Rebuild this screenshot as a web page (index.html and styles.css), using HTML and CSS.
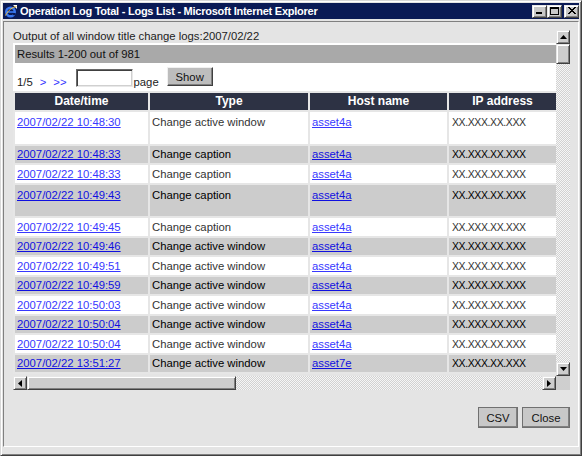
FILE: index.html
```html
<!DOCTYPE html>
<html>
<head>
<meta charset="utf-8">
<title>Operation Log Total - Logs List</title>
<link rel="stylesheet" href="styles.css">
</head>
<body>
<div class="window">
  <div class="titlebar">
    <svg class="app-icon" viewBox="0 0 14 14" width="14" height="14">
      <rect x="0.5" y="0.5" width="13" height="13" fill="#0a1a55"/>
      <path d="M9 1 L13 1 L13 5 Z" fill="#fff"/>
      <circle cx="6.5" cy="8" r="4.3" fill="none" stroke="#3a78f0" stroke-width="2.4"/>
      <rect x="3" y="7.2" width="7.5" height="1.6" fill="#3a78f0"/>
      <rect x="8.6" y="9" width="3" height="2.2" fill="#0a1a55"/>
      <path d="M1.5 11.5 C4 6 9 3 12.5 2.5" fill="none" stroke="#f0c040" stroke-width="1"/>
    </svg>
    <span class="title">Operation Log Total - Logs List - Microsoft Internet Explorer</span>
    <div class="caption-buttons">
      <span class="cbtn"><svg viewBox="0 0 10 8" width="10" height="8"><rect x="1" y="5" width="6" height="2" fill="#000"/></svg></span>
      <span class="cbtn"><svg viewBox="0 0 10 8" width="10" height="8"><rect x="0.5" y="0.5" width="8" height="7" fill="none" stroke="#000"/><rect x="0" y="0" width="9" height="2" fill="#000"/></svg></span>
      <span class="cbtn close"><svg viewBox="0 0 10 8" width="10" height="8"><path d="M1 0 L8 7 M8 0 L1 7 M2 0 L9 7 M9 0 L2 7" stroke="#000" stroke-width="1" fill="none"/></svg></span>
    </div>
  </div>

  <div class="client">
    <div class="scroller">
      <div class="viewport">
        <div class="heading">Output of all window title change logs:2007/02/22</div>
        <div class="panel">
          <div class="results">Results 1-200 out of 981</div>
          <div class="pager">
            <span class="pg-text">1/5</span>
            <a class="pg-link first" href="#">&gt;</a>
            <a class="pg-link" href="#">&gt;&gt;</a>
            <input class="pg-input" type="text">
            <span class="pg-text page">page</span>
            <button class="btn show">Show</button>
          </div>
          <table class="logs">
            <colgroup>
              <col class="c-date"><col class="c-type"><col class="c-host"><col class="c-ip">
            </colgroup>
            <thead>
              <tr><th>Date/time</th><th>Type</th><th>Host name</th><th>IP address</th></tr>
            </thead>
            <tbody>
              <tr class="tall"><td><a href="#">2007/02/22 10:48:30</a></td><td>Change active window</td><td><a href="#">asset4a</a></td><td class="ip">XX.XXX.XX.XXX</td></tr>
              <tr class="alt"><td><a href="#">2007/02/22 10:48:33</a></td><td>Change caption</td><td><a href="#">asset4a</a></td><td class="ip">XX.XXX.XX.XXX</td></tr>
              <tr><td><a href="#">2007/02/22 10:48:33</a></td><td>Change caption</td><td><a href="#">asset4a</a></td><td class="ip">XX.XXX.XX.XXX</td></tr>
              <tr class="alt tall"><td><a href="#">2007/02/22 10:49:43</a></td><td>Change caption</td><td><a href="#">asset4a</a></td><td class="ip">XX.XXX.XX.XXX</td></tr>
              <tr><td><a href="#">2007/02/22 10:49:45</a></td><td>Change caption</td><td><a href="#">asset4a</a></td><td class="ip">XX.XXX.XX.XXX</td></tr>
              <tr class="alt"><td><a href="#">2007/02/22 10:49:46</a></td><td>Change active window</td><td><a href="#">asset4a</a></td><td class="ip">XX.XXX.XX.XXX</td></tr>
              <tr><td><a href="#">2007/02/22 10:49:51</a></td><td>Change active window</td><td><a href="#">asset4a</a></td><td class="ip">XX.XXX.XX.XXX</td></tr>
              <tr class="alt"><td><a href="#">2007/02/22 10:49:59</a></td><td>Change active window</td><td><a href="#">asset4a</a></td><td class="ip">XX.XXX.XX.XXX</td></tr>
              <tr><td><a href="#">2007/02/22 10:50:03</a></td><td>Change active window</td><td><a href="#">asset4a</a></td><td class="ip">XX.XXX.XX.XXX</td></tr>
              <tr class="alt"><td><a href="#">2007/02/22 10:50:04</a></td><td>Change active window</td><td><a href="#">asset4a</a></td><td class="ip">XX.XXX.XX.XXX</td></tr>
              <tr><td><a href="#">2007/02/22 10:50:04</a></td><td>Change active window</td><td><a href="#">asset4a</a></td><td class="ip">XX.XXX.XX.XXX</td></tr>
              <tr class="alt"><td><a href="#">2007/02/22 13:51:27</a></td><td>Change active window</td><td><a href="#">asset7e</a></td><td class="ip">XX.XXX.XX.XXX</td></tr>
            </tbody>
          </table>
        </div>
      </div>

      <div class="vbar">
        <span class="sb-btn"><svg viewBox="0 0 7 4" width="7" height="4"><path d="M3.5 0 L7 4 L0 4 Z" fill="#000"/></svg></span>
        <span class="sb-thumb v"></span>
        <span class="sb-track"></span>
        <span class="sb-btn"><svg viewBox="0 0 7 4" width="7" height="4"><path d="M0 0 L7 0 L3.5 4 Z" fill="#000"/></svg></span>
      </div>
      <div class="hbar">
        <span class="sb-btn"><svg viewBox="0 0 4 7" width="4" height="7"><path d="M4 0 L4 7 L0 3.5 Z" fill="#000"/></svg></span>
        <span class="sb-thumb h"></span>
        <span class="sb-track"></span>
        <span class="sb-btn"><svg viewBox="0 0 4 7" width="4" height="7"><path d="M0 0 L4 3.5 L0 7 Z" fill="#000"/></svg></span>
      </div>
      <div class="corner"></div>
    </div>

    <div class="actions">
      <button class="btn csv">CSV</button>
      <button class="btn close-btn">Close</button>
    </div>
  </div>
</div>
</body>
</html>
```
FILE: styles.css
```css
* { box-sizing: border-box; }

html, body {
  margin: 0;
  padding: 0;
}

body {
  width: 582px;
  height: 456px;
  overflow: hidden;
  background: #e4e4e4;
  font-family: "Liberation Sans", Arial, sans-serif;
  font-size: 11.3px;
  color: #222;
}

/* ---------- window frame ---------- */
.window {
  width: 582px;
  height: 456px;
  display: flex;
  flex-direction: column;
  background: #e4e4e4;
  border: 1px solid;
  border-color: #d8d8d8 #404040 #404040 #d8d8d8;
  box-shadow: inset 1px 1px #ffffff, inset -1px -1px #808080;
  padding: 2px 2px 8px 2px;
}

.titlebar {
  flex: none;
  height: 16px;
  background: #0a1a55;
  display: flex;
  align-items: center;
  padding-left: 1px;
}

.app-icon {
  flex: none;
  display: block;
}

.title {
  flex: 1;
  margin-left: 2px;
  color: #fff;
  font-family: "Liberation Sans", Arial, sans-serif;
  font-weight: bold;
  font-size: 11px;
  letter-spacing: -0.25px;
  line-height: 16px;
  white-space: nowrap;
  overflow: hidden;
}

.caption-buttons {
  display: flex;
  align-items: center;
  flex: none;
}

.cbtn {
  width: 15px;
  height: 13px;
  display: flex;
  align-items: center;
  justify-content: center;
  background: #c8c8c8;
  border: 1px solid;
  border-color: #e8e8e8 #404040 #404040 #e8e8e8;
  box-shadow: inset 1px 1px #ffffff, inset -1px -1px #808080;
}

.cbtn svg { display: block; }
.cbtn.close { margin-left: 2px; }

/* ---------- client area ---------- */
.client {
  flex: 1;
  margin-top: 2px;
  border: 1px solid;
  border-color: #808080 #ffffff #ffffff #808080;
  padding: 8px 8px 0 9px;
  display: flex;
  flex-direction: column;
}

.scroller {
  height: 360px;
  display: grid;
  grid-template-columns: 1fr 14px;
  grid-template-rows: 1fr 14px;
}

.viewport {
  grid-column: 1;
  grid-row: 1;
  overflow: hidden;
  background: #e4e4e4;
}

.heading {
  height: 13px;
  line-height: 13px;
  white-space: nowrap;
  color: #222;
}

.panel {
  background: #fff;
  padding-top: 2px;
}

.results {
  margin-left: 2px;
  height: 18px;
  line-height: 18px;
  padding-left: 2px;
  background: #a9a9a9;
  color: #111;
}

.pager {
  height: 28px;
  display: flex;
  align-items: flex-start;
  padding-left: 4px;
}

.pg-text {
  margin-top: 12px;
  line-height: 14px;
  color: #222;
}

.pg-text.page { margin-left: 1px; }

.pg-link {
  margin-top: 12px;
  line-height: 14px;
  color: #3333ff;
  text-decoration: none;
  margin-left: 7px;
}

.pg-input {
  margin: 6px 0 0 9px;
  width: 57px;
  height: 18px;
  padding: 0 2px;
  background: #fff;
  border: 1px solid;
  border-color: #6a6a6a #e8e8e8 #e8e8e8 #6a6a6a;
  box-shadow: inset 1px 1px #404040, inset -1px -1px #d0d0d0;
  font: inherit;
}

.btn {
  font-family: "Liberation Sans", Arial, sans-serif;
  font-size: 11.3px;
  color: #111;
  background: #c6c6c6;
  border: 1px solid;
  border-color: #f0f0f0 #404040 #404040 #f0f0f0;
  box-shadow: inset -1px -1px #808080;
  padding: 0;
}

.btn.show {
  margin: 4px 0 0 8px;
  width: 46px;
  height: 19px;
  background: #bdbdbd;
}

/* ---------- table ---------- */
.logs {
  border-collapse: separate;
  border-spacing: 2px;
  background: #e6e6e6;
  table-layout: fixed;
  width: 545px;
}

.c-date { width: 133px; }
.c-type { width: 158px; }
.c-host { width: 137px; }
.c-ip { width: 107px; }

.logs th {
  height: 17px;
  padding: 0;
  background: #2d3244;
  color: #fff;
  font-weight: bold;
  font-size: 12px;
  line-height: 17px;
  text-align: center;
  white-space: nowrap;
}

.logs td {
  height: 17.5px;
  padding: 0 2px;
  line-height: 14px;
  background: #fff;
  color: #333;
  white-space: nowrap;
  overflow: hidden;
  vertical-align: middle;
}

.logs td a {
  color: #3838ff;
  text-decoration: underline;
}

.logs tr.alt td {
  background: #cccccc;
  color: #000;
}

.logs tr.alt td a { color: #1010e0; }

.logs tr.tall td {
  height: 31.5px;
  vertical-align: top;
  padding-top: 3px;
}

.logs td.ip {
  padding-left: 3px;
  font-size: 10.5px;
  letter-spacing: -0.4px;
}

/* ---------- scrollbars ---------- */
.vbar {
  grid-column: 2;
  grid-row: 1;
  display: flex;
  flex-direction: column;
}

.hbar {
  grid-column: 1;
  grid-row: 2;
  display: flex;
}

.corner {
  grid-column: 2;
  grid-row: 2;
  background: #cfcfcf;
}

.sb-btn {
  flex: none;
  width: 14px;
  height: 14px;
  display: flex;
  align-items: center;
  justify-content: center;
  background: #cdcdcd;
  border: 1px solid;
  border-color: #e6e6e6 #404040 #404040 #e6e6e6;
  box-shadow: inset 1px 1px #ffffff, inset -1px -1px #808080;
}

.sb-btn svg { display: block; }

.sb-thumb {
  flex: none;
  background: #cdcdcd;
  border: 1px solid;
  border-color: #e6e6e6 #404040 #404040 #e6e6e6;
  box-shadow: inset 1px 1px #ffffff, inset -1px -1px #808080;
}

.sb-thumb.v { height: 20px; width: 14px; }
.sb-thumb.h { width: 209px; height: 14px; }

.sb-track {
  flex: 1;
  background-color: #f6f6f6;
  background-image: conic-gradient(#d2d2d2 25%, transparent 0 50%, #d2d2d2 0 75%, transparent 0);
  background-size: 2px 2px;
}

/* ---------- bottom actions ---------- */
.actions {
  display: flex;
  justify-content: flex-end;
  gap: 4px;
  margin-top: 17px;
}

.actions .btn {
  height: 21px;
  background: #c8c8c8;
  border-color: #f0f0f0 #303030 #303030 #f0f0f0;
  outline: 1px solid #707070;
  outline-offset: -1px;
}

.btn.csv { width: 40px; }
.btn.close-btn { width: 48px; }
```
